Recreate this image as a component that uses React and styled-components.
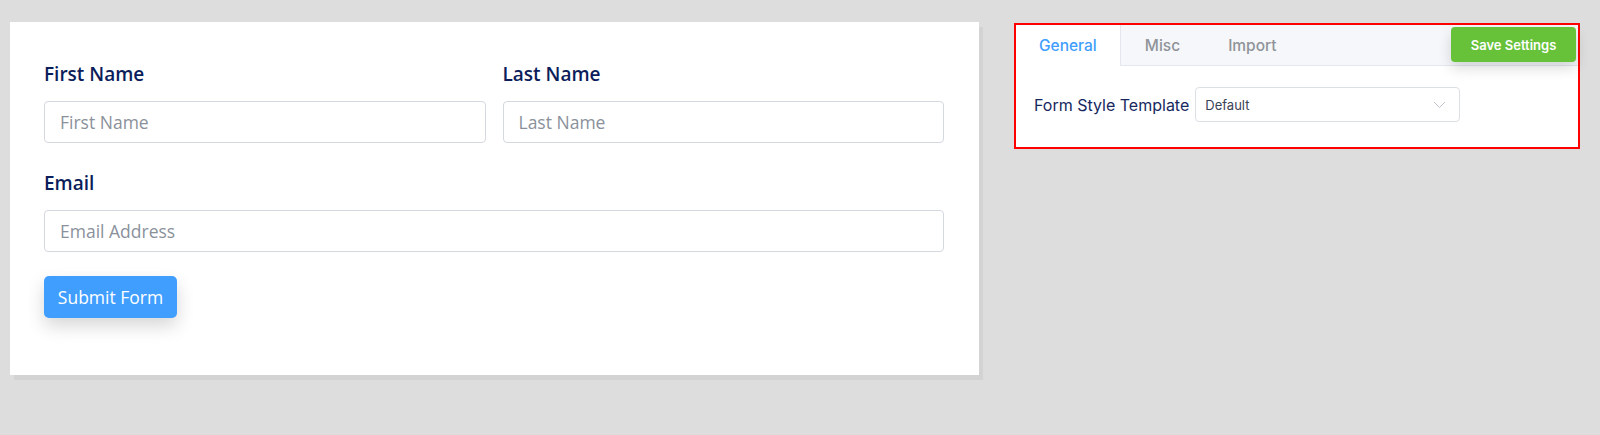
import React from "react";
import styled, { createGlobalStyle } from "styled-components";

const Global = createGlobalStyle`
  html, body { margin: 0; padding: 0; background: #dddddd; }
  body { font-family: "Open Sans", sans-serif; }
  * { box-sizing: border-box; }
`;

const Page = styled.div`
  display: flex;
  align-items: flex-start;
  padding: 22px 10px;
  gap: 35px;
`;

const Card = styled.div`
  width: 969px;
  background: #ffffff;
  padding: 37px 35px 57px 34px;
  box-shadow: 4px 5px 0 #d3d3d3;
`;

const Row = styled.div`
  display: grid;
  grid-template-columns: ${(p) => (p.$cols === 2 ? "1fr 1fr" : "1fr")};
  column-gap: 17px;
  margin-bottom: ${(p) => p.$mb || 0}px;
`;

const Field = styled.div`
  display: flex;
  flex-direction: column;
`;

const Label = styled.label`
  font-family: "Open Sans", sans-serif;
  font-weight: 600;
  font-size: 19px;
  line-height: 30px;
  color: #0b1d5a;
  margin-bottom: 12px;
`;

const Input = styled.input`
  height: 42px;
  border: 1px solid #d4d9e0;
  border-radius: 4px;
  padding: 0 15px;
  font-family: "Open Sans", sans-serif;
  font-size: 17.5px;
  color: #333;
  outline: none;
  &::placeholder { color: #8a919b; }
`;

const SubmitButton = styled.button`
  height: 42px;
  width: 133px;
  border: none;
  border-radius: 5px;
  background: #409eff;
  color: #fff;
  font-family: "Open Sans", sans-serif;
  font-size: 17.5px;
  padding: 0;
  box-shadow: 0 8px 18px rgba(0, 0, 0, 0.16);
  cursor: pointer;
`;

const Panel = styled.div`
  position: relative;
  width: 566px;
  margin-top: 1px;
  border: 2px solid #ff0000;
  background: #fff;
  font-family: Inter, "Liberation Sans", sans-serif;
`;

const TabBar = styled.div`
  display: flex;
  height: 41px;
  background: #f5f7fa;
  border-bottom: 1px solid #e4e7ed;
`;

const Tab = styled.div`
  height: 41px;
  padding: 0 ${(p) => (p.$active ? 23 : 24)}px;
  display: flex;
  align-items: center;
  font-size: 15.5px;
  font-weight: 500;
  color: ${(p) => (p.$active ? "#409eff" : "#909399")};
  background: ${(p) => (p.$active ? "#ffffff" : "transparent")};
  border-right: ${(p) => (p.$active ? "1px solid #e4e7ed" : "none")};
  margin-bottom: ${(p) => (p.$active ? "-1px" : "0")};
`;

const SaveButton = styled.button`
  position: absolute;
  top: 2px;
  right: 2px;
  width: 125px;
  height: 35px;
  border: none;
  border-radius: 4px;
  background: #67c23a;
  color: #fff;
  font-family: Inter, "Liberation Sans", sans-serif;
  font-weight: 600;
  font-size: 13px;
  padding: 0;
  box-shadow: 0 6px 14px rgba(0, 0, 0, 0.15);
  cursor: pointer;
`;

const Content = styled.div`
  display: flex;
  align-items: center;
  gap: 6px;
  padding: 21px 18px 25px;
`;

const SettingLabel = styled.span`
  font-size: 16px;
  color: #16285e;
`;

const Select = styled.div`
  width: 265px;
  height: 35px;
  border: 1px solid #dcdfe6;
  border-radius: 4px;
  display: flex;
  align-items: center;
  justify-content: space-between;
  padding: 0 13px 0 9px;
  font-size: 13px;
  color: #3a4256;
`;

const Chevron = () => (
  <svg width="13" height="8" viewBox="0 0 13 8" fill="none">
    <polyline points="1,1 6.5,6.5 12,1" stroke="#c0c4cc" strokeWidth="1" />
  </svg>
);

export default function App() {
  return (
    <>
      <Global />
      <Page>
        <Card>
          <Row $cols={2} $mb={25}>
            <Field>
              <Label>First Name</Label>
              <Input placeholder="First Name" />
            </Field>
            <Field>
              <Label>Last Name</Label>
              <Input placeholder="Last Name" />
            </Field>
          </Row>
          <Row $mb={24}>
            <Field>
              <Label>Email</Label>
              <Input placeholder="Email Address" />
            </Field>
          </Row>
          <SubmitButton>Submit Form</SubmitButton>
        </Card>
        <Panel>
          <TabBar>
            <Tab $active>General</Tab>
            <Tab>Misc</Tab>
            <Tab>Import</Tab>
          </TabBar>
          <SaveButton>Save Settings</SaveButton>
          <Content>
            <SettingLabel>Form Style Template</SettingLabel>
            <Select>
              <span>Default</span>
              <Chevron />
            </Select>
          </Content>
        </Panel>
      </Page>
    </>
  );
}
